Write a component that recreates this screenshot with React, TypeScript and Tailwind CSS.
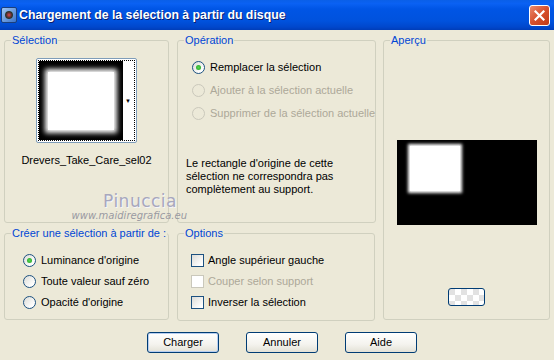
import React from 'react';

const FONT = "font-['Liberation_Sans',Arial,sans-serif]";

// XP-style radio button
const Radio: React.FC<{ checked?: boolean; disabled?: boolean; label: string }> = ({ checked, disabled, label }) => (
  <div className="flex items-center gap-[5px] h-[13px] whitespace-nowrap">
    <span
      className={`shrink-0 w-[13px] h-[13px] rounded-full border flex items-center justify-center ${
        disabled
          ? 'border-[#CAC8BB] bg-[#ECE9D8]'
          : 'border-[#1C5180] bg-[linear-gradient(135deg,#DCDCD7_0%,#FFFFFF_80%)]'
      }`}
    >
      {checked && (
        <span className="w-[5px] h-[5px] rounded-full bg-[radial-gradient(circle,#55D551_0%,#21A121_100%)]" />
      )}
    </span>
    <span className={disabled ? 'text-[#ACA899]' : 'text-black'}>{label}</span>
  </div>
);

// XP-style checkbox
const Check: React.FC<{ disabled?: boolean; label: string }> = ({ disabled, label }) => (
  <div className="flex items-center gap-[4px] h-[13px] whitespace-nowrap">
    <span
      className={`shrink-0 w-[13px] h-[13px] border ${
        disabled
          ? 'border-[#CAC8BB] bg-white'
          : 'border-[#1C5180] bg-[linear-gradient(135deg,#DCDCD7_0%,#FFFFFF_85%)]'
      }`}
    />
    <span className={disabled ? 'text-[#ACA899]' : 'text-black'}>{label}</span>
  </div>
);

const Group: React.FC<{ title: string; className?: string; children?: React.ReactNode }> = ({
  title,
  className = '',
  children,
}) => (
  <fieldset className={`border border-[#D0D0BF] rounded-[3px] ${className}`}>
    <legend className="ml-[6px] px-[1px] text-[#0046D5] leading-[13px] whitespace-nowrap">{title}</legend>
    {children}
  </fieldset>
);

const XpButton: React.FC<{ label: string; primary?: boolean }> = ({ label, primary }) => (
  <button
    className={`w-[72px] h-[21px] rounded-[3px] border border-[#003C74] bg-[linear-gradient(180deg,#FFFFFF_0%,#F4F3EE_60%,#E3E1D6_100%)] text-black text-[11px] ${
      primary ? 'shadow-[inset_0_0_0_1px_#B7CEF0]' : ''
    }`}
  >
    {label}
  </button>
);

export default function App() {
  return (
    <div className={`w-[554px] h-[360px] bg-[#ECE9D8] text-[11px] ${FONT} relative overflow-hidden`}>
      {/* Title bar */}
      <div className="h-[30px] flex items-center pl-[1px] pr-[4px] bg-[linear-gradient(180deg,#0A5FE8_0%,#0A61F3_12%,#0055E5_30%,#0052DD_70%,#0047CC_90%,#003DB8_100%)]">
        <span className="w-[16px] h-[16px] rounded-[2px] bg-[linear-gradient(135deg,#9EC6F4,#3B73C9)] border border-[#1C3F7A] flex items-center justify-center">
          <span className="w-[8px] h-[8px] rounded-full bg-[radial-gradient(circle,#E04848_0%,#2B2B2B_60%,#51A85A_100%)]" />
        </span>
        <span className="ml-[2px] text-white font-bold text-[12.3px] [text-shadow:1px_1px_0_#0A1E6E]">
          Chargement de la sélection à partir du disque
        </span>
        <span className="ml-auto w-[21px] h-[21px] rounded-[3px] border border-white bg-[linear-gradient(135deg,#E98A6E_0%,#D7502C_50%,#C23A17_100%)] flex items-center justify-center">
          <svg width="11" height="11" viewBox="0 0 11 11">
            <path d="M1.5 1.5 L9.5 9.5 M9.5 1.5 L1.5 9.5" stroke="white" strokeWidth="2.2" strokeLinecap="square" />
          </svg>
        </span>
      </div>

      {/* Body */}
      <div className="flex gap-[8px] pl-[4px] pt-[4px]">
        {/* Left column */}
        <div className="flex flex-col gap-[4px] w-[165px]">
          <Group title="Sélection" className="h-[189px]">
            <div className="flex flex-col items-center pt-[11px]">
              <div className="w-[101px] h-[85px] border border-[#7F9DB9] rounded-[2px] p-[1px] bg-white">
                <div className="w-full h-full border border-dotted border-black flex">
                  <div className="w-[84px] h-full bg-black flex items-center justify-center">
                    <div className="w-[66px] h-[58px] bg-white shadow-[0_0_5px_3px_#ffffff]" />
                  </div>
                  <div className="flex-1 bg-white flex items-center justify-end pr-[3px] text-[6px] leading-none">▼</div>
                </div>
              </div>
              <div className="mt-[9px] text-black">Drevers_Take_Care_sel02</div>
            </div>
          </Group>
          <Group title="Créer une sélection à partir de :" className="h-[93px]">
            <div className="flex flex-col gap-[8px] pl-[18px] pt-[14px]">
              <Radio checked label="Luminance d'origine" />
              <Radio label="Toute valeur sauf zéro" />
              <Radio label="Opacité d'origine" />
            </div>
          </Group>
        </div>

        {/* Middle column */}
        <div className="flex flex-col gap-[4px] w-[198px]">
          <Group title="Opération" className="h-[189px]">
            <div className="flex flex-col gap-[10px] pl-[14px] pt-[14px]">
              <Radio checked label="Remplacer la sélection" />
              <Radio disabled label="Ajouter à la sélection actuelle" />
              <Radio disabled label="Supprimer de la sélection actuelle" />
            </div>
            <p className="pl-[8px] pt-[37px] leading-[13px] text-black">
              Le rectangle d'origine de cette
              <br />
              sélection ne correspondra pas
              <br />
              complètement au support.
            </p>
          </Group>
          <Group title="Options" className="h-[94px]">
            <div className="flex flex-col gap-[8px] pl-[13px] pt-[14px]">
              <Check label="Angle supérieur gauche" />
              <Check disabled label="Couper selon support" />
              <Check label="Inverser la sélection" />
            </div>
          </Group>
        </div>

        {/* Right column */}
        <Group title="Aperçu" className="w-[167px] h-[286px]">
          <div className="flex flex-col items-center pt-[93px]">
            <div className="w-[140px] h-[85px] bg-black flex items-start pl-[13px] pt-[6px]">
              <div className="w-[50px] h-[45px] bg-white shadow-[0_0_3px_2px_#ffffff]" />
            </div>
            <div className="mt-[63px] w-[37px] h-[18px] rounded-[3px] border border-[#003C74] bg-[repeating-conic-gradient(#FFFFFF_0%_25%,#E2E2E2_0%_50%)] bg-[length:12px_12px]" />
          </div>
        </Group>
      </div>

      {/* Buttons */}
      <div className="flex gap-[27px] pl-[147px] pt-[11px]">
        <XpButton primary label="Charger" />
        <XpButton label="Annuler" />
        <XpButton label="Aide" />
      </div>

      {/* Watermark */}
      <div className="absolute left-[70px] top-[192px] w-[117px] pointer-events-none flex flex-col items-end">
        <span className="text-[17px] leading-[18px] tracking-[0.5px] text-[#A7A7BD] font-['DejaVu_Sans',sans-serif] pr-[10px] [text-shadow:1px_1px_0_#F5F5FA]">Pinuccia</span>
        <span className="text-[10px] leading-[12px] italic text-[#9A9AA2] font-['DejaVu_Sans',sans-serif]">www.maidiregrafica.eu</span>
      </div>
    </div>
  );
}
